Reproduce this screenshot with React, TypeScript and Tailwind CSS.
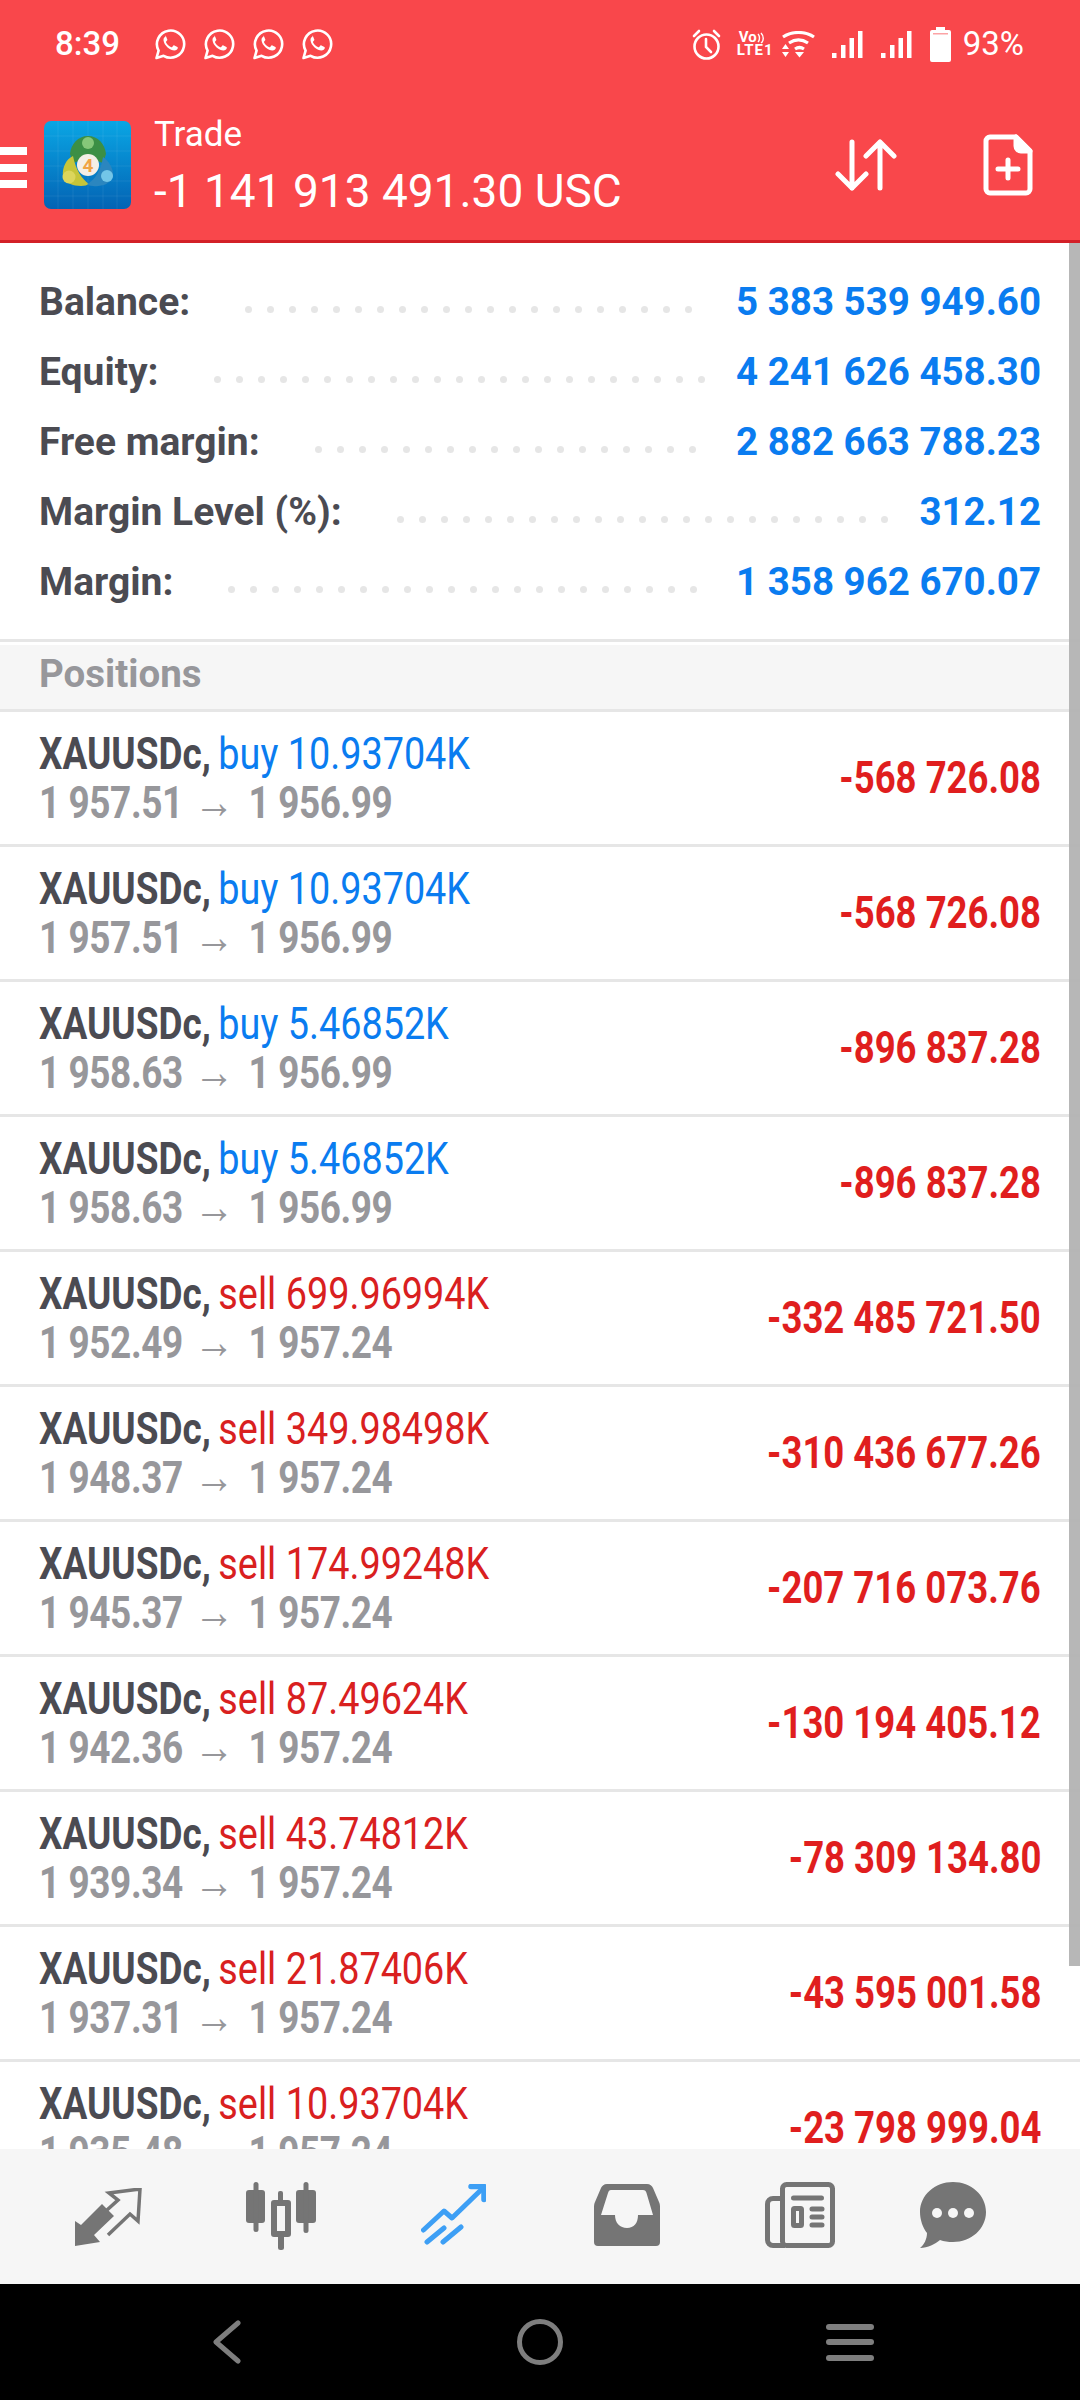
import React from "react";

const sumRows = [
  { label: "Balance:", value: "5 383 539 949.60" },
  { label: "Equity:", value: "4 241 626 458.30" },
  { label: "Free margin:", value: "2 882 663 788.23" },
  { label: "Margin Level (%):", value: "312.12" },
  { label: "Margin:", value: "1 358 962 670.07" },
];

const positions = [
  { side: "buy", lots: "10.93704K", open: "1 957.51", now: "1 956.99", pl: "-568 726.08" },
  { side: "buy", lots: "10.93704K", open: "1 957.51", now: "1 956.99", pl: "-568 726.08" },
  { side: "buy", lots: "5.46852K", open: "1 958.63", now: "1 956.99", pl: "-896 837.28" },
  { side: "buy", lots: "5.46852K", open: "1 958.63", now: "1 956.99", pl: "-896 837.28" },
  { side: "sell", lots: "699.96994K", open: "1 952.49", now: "1 957.24", pl: "-332 485 721.50" },
  { side: "sell", lots: "349.98498K", open: "1 948.37", now: "1 957.24", pl: "-310 436 677.26" },
  { side: "sell", lots: "174.99248K", open: "1 945.37", now: "1 957.24", pl: "-207 716 073.76" },
  { side: "sell", lots: "87.49624K", open: "1 942.36", now: "1 957.24", pl: "-130 194 405.12" },
  { side: "sell", lots: "43.74812K", open: "1 939.34", now: "1 957.24", pl: "-78 309 134.80" },
  { side: "sell", lots: "21.87406K", open: "1 937.31", now: "1 957.24", pl: "-43 595 001.58" },
  { side: "sell", lots: "10.93704K", open: "1 935.48", now: "1 957.24", pl: "-23 798 999.04" },
];

const leaderDots = Array.from({ length: 34 });

function WhatsApp() {
  return (
    <svg width="32" height="32" viewBox="0 0 32 32" fill="none">
      <path d="M2.5 30 L4.6 22.6 A13.6 13.6 0 1 1 9.6 27.8 Z" stroke="#fff" strokeWidth="2.6" strokeLinejoin="round" />
      <path d="M11.6 8.6c-.9.3-2.3 1.6-2.1 3.6.3 2.8 1.9 5.2 4.1 7.2 2.3 2 4.7 3 6.8 3 1.8 0 3.2-1.3 3.4-2.5.1-.5 0-.8-.4-1l-3-1.5c-.4-.2-.7-.1-1 .2l-1.2 1.5c-.3.3-.6.3-.9.2-1.3-.5-2.5-1.3-3.4-2.3-.8-.8-1.4-1.7-1.9-2.7-.1-.3 0-.6.2-.8l1-1.2c.2-.3.3-.6.1-.9l-1.2-3c-.2-.5-.5-.6-.9-.6z" fill="#fff" />
    </svg>
  );
}

function Signal() {
  return (
    <svg width="31" height="27" viewBox="0 0 31 27" fill="#fff">
      <rect x="0" y="22" width="4.5" height="5" />
      <rect x="9" y="14" width="4.5" height="13" />
      <rect x="17.5" y="7" width="4.5" height="20" />
      <rect x="26" y="0" width="4.5" height="27" />
    </svg>
  );
}

function StatusBar() {
  return (
    <div className="flex h-[90px] items-center pr-[56px] pb-[2px] pl-[55px] text-white">
      <span className="w-[99px] text-[33px] font-medium">8:39</span>
      <div className="flex gap-[17px]">
        <WhatsApp />
        <WhatsApp />
        <WhatsApp />
        <WhatsApp />
      </div>
      <div className="ml-auto flex items-center">
        {/* alarm */}
        <svg width="29" height="31" viewBox="0 0 29 31" fill="none" stroke="#fff" strokeWidth="2.6" strokeLinecap="round">
          <circle cx="14.5" cy="17.5" r="12" />
          <path d="M14 10v8l5 5M2 7l5-5M27 7l-5-5" />
        </svg>
        {/* volte */}
        <div className="ml-[16px] flex w-[36px] flex-col text-[15px] leading-[13px] font-bold">
          <div className="flex items-center pl-[2px]">
            <span>Vo</span>
            <svg width="9" height="12" viewBox="0 0 9 12" fill="none" stroke="#fff" strokeWidth="1.4">
              <path d="M1 2c2 2 2 6 0 8M4 1c3 3 3 8 0 10" />
            </svg>
          </div>
          <span className="tracking-[1px]">LTE1</span>
        </div>
        {/* wifi */}
        <svg className="ml-[9px]" width="33" height="27" viewBox="0 0 33 27" fill="none" stroke="#fff" strokeWidth="3.2">
          <path d="M1 6C10 0 23 0 32 6M7 12c6-4 13-4 19 0M13 18c3-2 6-2 9 0" />
          <path d="M0 18l3.5-5 3.5 5zM0 21l3.5 5 3.5-5zM13 21h9l-4.5 5.5z" fill="#fff" stroke="none" />
        </svg>
        <div className="ml-[17px]">
          <Signal />
        </div>
        <div className="ml-[18px]">
          <Signal />
        </div>
        {/* battery */}
        <svg className="ml-[18px]" width="21" height="35" viewBox="0 0 21 35" fill="#fff">
          <path d="M6 0h9v3h4a2 2 0 0 1 2 2v28a2 2 0 0 1-2 2H2a2 2 0 0 1-2-2V5a2 2 0 0 1 2-2h4z" />
          <rect x="3" y="6" width="15" height="1.5" fill="#f9474b" opacity="0.5" />
        </svg>
        <span className="ml-[12px] text-[33px] font-normal">93%</span>
      </div>
    </div>
  );
}

function AppLogo() {
  return (
    <svg width="87" height="88" viewBox="0 0 87 88" className="shrink-0">
      <defs>
        <linearGradient id="mtBg" x1="0" y1="0" x2="0" y2="1">
          <stop offset="0" stopColor="#0aa6e4" />
          <stop offset="1" stopColor="#0363b4" />
        </linearGradient>
      </defs>
      <rect width="87" height="88" rx="7" fill="url(#mtBg)" />
      <path d="M14 0v88M29 0v88M44 0v88M59 0v88M73 0v88M0 15h87M0 30h87M0 45h87M0 60h87M0 75h87" stroke="#fff" strokeOpacity="0.07" strokeWidth="1" />
      <path d="M44 15c10 0 17 8 18 18l-3 9-15-5-15 5-3-9c1-10 8-18 18-18z" fill="#3c8f45" />
      <circle cx="44" cy="22" r="6" fill="#86c77a" />
      <path d="M29 35c-7 3-11 12-10 20 2 7 10 10 18 10 4 0 6-1 8-2-8-6-13-14-16-28z" fill="#c6c53a" />
      <circle cx="25" cy="56" r="6.5" fill="#dcd65c" />
      <path d="M59 36c6 4 11 12 10 20-3 7-12 10-20 9-3 0-5-1-6-2 8-4 14-14 16-27z" fill="#2b86bf" />
      <circle cx="63" cy="55" r="6" fill="#73c6e8" />
      <circle cx="44" cy="44" r="11" fill="#f4efe6" />
      <text x="44" y="51" textAnchor="middle" fontSize="19" fontWeight="700" fill="#f0a444" fontFamily="Roboto, sans-serif">4</text>
    </svg>
  );
}

function Header() {
  return (
    <div className="h-[243px] border-b-[3px] border-[#d32028] bg-[#f9474b]">
      <StatusBar />
      <div className="flex h-[150px] items-start">
        {/* menu bars are cut by the screen edge */}
        <div className="mt-[57px] flex w-[27px] flex-col gap-[8.5px]">
          <div className="h-[8px] bg-white" />
          <div className="h-[8px] bg-white" />
          <div className="h-[8px] bg-white" />
        </div>
        <div className="mt-[31px] ml-[17px]">
          <AppLogo />
        </div>
        <div className="mt-[19px] ml-[23px] flex flex-col whitespace-nowrap text-white">
          <span className="text-[35px] leading-[52px] font-normal">Trade</span>
          <span className="text-[46px] leading-[60px] font-normal">-1 141 913 491.30 USC</span>
        </div>
        <svg className="mt-[49px] ml-auto" width="62" height="52" viewBox="0 0 62 52" fill="none" stroke="#fff" strokeWidth="5" strokeLinecap="round" strokeLinejoin="round">
          <path d="M17 3v46M3 35l14 14 14-14M45 49V3M31 17L45 3l14 14" />
        </svg>
        <svg className="mt-[44px] mr-[47px] ml-[86px]" width="50" height="62" viewBox="0 0 50 62" fill="none" stroke="#fff" strokeWidth="5" strokeLinejoin="round">
          <path d="M7 3h26l14 14v38a4 4 0 0 1-4 4H7a4 4 0 0 1-4-4V7a4 4 0 0 1 4-4z" />
          <path d="M33 3v9a5 5 0 0 0 5 5h9z" fill="#fff" />
          <path d="M25 26v18M15 35h20" strokeLinecap="round" />
        </svg>
      </div>
    </div>
  );
}

function Summary() {
  return (
    <div className="h-[396px] pt-[24px] pr-[39px] pl-[39px]">
      {sumRows.map((r) => (
        <div key={r.label} className="flex h-[70px] items-center">
          <span className="text-[39px] font-bold text-[#4b4b52]">{r.label}</span>
          {/* dotted leader, extra dots wrap out of sight */}
          <div className="mt-[15px] mr-[22px] ml-[55px] flex h-[7px] min-w-0 flex-1 flex-wrap gap-x-[15px] overflow-hidden">
            {leaderDots.map((_, i) => (
              <span key={i} className="size-[7px] rounded-full bg-[#e6e6e6]" />
            ))}
          </div>
          <span className="text-[38.5px] font-bold text-[#0a7cf0]">{r.value}</span>
        </div>
      ))}
    </div>
  );
}

function PositionRow({ p }: { p: (typeof positions)[number] }) {
  const isBuy = p.side === "buy";
  return (
    <div className="flex h-[135px] items-center justify-between border-b-[3px] border-[#e6e6e6] pr-[39px] pl-[39px]">
      <div className="flex origin-left scale-x-[0.84] flex-col text-[44px] leading-[48px] whitespace-nowrap">
        <div>
          <span className="font-bold text-[#4b4b52]">XAUUSDc, </span>
          <span className={isBuy ? "-ml-[2px] text-[45px] text-[#0a7cf0]" : "-ml-[2px] text-[45px] text-[#d9201f]"}>
            {p.side} {p.lots}
          </span>
        </div>
        <div className="flex items-baseline font-bold tracking-[-0.5px] text-[#97979b]">
          <span className="whitespace-pre">{p.open} </span>
          <span className="mr-[7px] ml-[3px] text-[48px] font-normal">→</span>
          <span className="whitespace-pre"> {p.now}</span>
        </div>
      </div>
      <span className="origin-right scale-x-[0.83] text-[44px] font-bold whitespace-nowrap text-[#e01e1e]">{p.pl}</span>
    </div>
  );
}

function Positions() {
  return (
    <div className="min-h-0 flex-1 overflow-hidden">
      <div className="border-t-[3px] border-[#e6e6e6] pt-[3px]">
        <div className="flex h-[67px] items-center border-b-[3px] border-[#e6e6e6] bg-[#f6f6f6] pb-[7px] pl-[39px] text-[38.5px] font-bold text-[#97979b]">
          Positions
        </div>
      </div>
      {positions.map((p, i) => (
        <PositionRow key={i} p={p} />
      ))}
    </div>
  );
}

function BottomNav() {
  const g = "#757575";
  return (
    <div className="flex h-[135px] shrink-0 items-start bg-[#f6f6f6] pl-[75px]">
      {/* quotes */}
      <svg className="mt-[39px]" width="67" height="58" viewBox="0 0 67 58" fill="none">
        <path d="M0 58V33l6 4 21-21 12 12-20 19 6 7z" fill={g} />
        <path d="M32 22l11-10-9-7 31-4-2 32-8-7-22 21" stroke={g} strokeWidth="3.5" />
      </svg>
      {/* chart */}
      <svg className="mt-[33px] ml-[104px]" width="70" height="68" viewBox="0 0 70 68" fill={g}>
        <rect x="0" y="8" width="19" height="33" rx="3" />
        <rect x="7.5" y="0" width="5" height="50" rx="2.5" />
        <path fillRule="evenodd" d="M28 18h14a3 3 0 0 1 3 3v31a3 3 0 0 1-3 3H28a3 3 0 0 1-3-3V21a3 3 0 0 1 3-3zM31 24v25h8V24z" />
        <rect x="32" y="9" width="5" height="12" rx="2" />
        <rect x="32" y="52" width="6" height="16" rx="2.5" />
        <rect x="50" y="8" width="20" height="33" rx="3" />
        <rect x="57.5" y="0" width="5" height="51" rx="2.5" />
      </svg>
      {/* trade */}
      <svg className="mt-[35px] ml-[105px]" width="65" height="61" viewBox="0 0 65 61" fill="none" stroke="#3d9ff5" strokeWidth="5" strokeLinecap="round" strokeLinejoin="round">
        <path d="M2.5 46L23 27l8 7L62 4" />
        <path d="M50 2.5h13v13" strokeWidth="5.5" />
        <path d="M6 58l17-14M22 58l18-15" />
      </svg>
      {/* history */}
      <svg className="mt-[35px] ml-[108px]" width="66" height="62" viewBox="0 0 66 62" fill={g}>
        <path d="M13 0H53c3 0 5 2 6 4l6 14c1 2 1 4 1 6v34a4 4 0 0 1-4 4H4a4 4 0 0 1-4-4V24c0-2 0-4 1-6L7 4c1-2 3-4 6-4z" />
        <path d="M17 6H49c2 0 3 1 3.5 3L59 31H44c0 8-4 13-11 13s-12-5-12-13H7l7-22c.5-2 1.5-3 3-3z" fill="#f6f6f6" />
      </svg>
      {/* news */}
      <svg className="mt-[33px] ml-[105px]" width="70" height="66" viewBox="0 0 70 66" fill="none" stroke={g} strokeWidth="5">
        <rect x="17.5" y="2.5" width="50" height="61" rx="4" />
        <path d="M15 16.5H8A5.5 5.5 0 0 0 2.5 22v36A5.5 5.5 0 0 0 8 63.5h12" />
        <path d="M28.5 16h28M47 27h10M47 35h10M47 43h10" strokeLinecap="round" />
        <rect x="28.5" y="26.5" width="8" height="17" rx="1" />
      </svg>
      {/* chat */}
      <svg className="mt-[33px] ml-[85px]" width="66" height="66" viewBox="0 0 66 66" fill={g}>
        <path d="M33 0C51 0 66 13 66 30S51 60 33 60c-5 0-9-.5-13-2-5 4-12 8-20 8 4-3 7-9 7-15C3 46 0 38 0 30 0 13 15 0 33 0z" />
        <circle cx="17" cy="31" r="5" fill="#f6f6f6" />
        <circle cx="33" cy="31" r="5" fill="#f6f6f6" />
        <circle cx="49" cy="31" r="5" fill="#f6f6f6" />
      </svg>
    </div>
  );
}

function NavBar() {
  return (
    <div className="flex h-[116px] shrink-0 items-center bg-black pl-[211px]">
      <svg width="32" height="44" viewBox="0 0 32 44" fill="none" stroke="#7e7e7e" strokeWidth="5" strokeLinecap="round" strokeLinejoin="round">
        <path d="M27 3L5 22l22 19" />
      </svg>
      <div className="ml-[274px] size-[46px] rounded-full border-[5px] border-[#7e7e7e]" />
      <div className="ml-[263px] flex w-[48px] flex-col gap-[9.5px]">
        <div className="h-[6px] rounded-full bg-[#7e7e7e]" />
        <div className="h-[6px] rounded-full bg-[#7e7e7e]" />
        <div className="h-[6px] rounded-full bg-[#7e7e7e]" />
      </div>
    </div>
  );
}

export default function App() {
  return (
    <div className="flex h-[2400px] w-[1080px] flex-col overflow-hidden bg-white font-['Roboto',sans-serif]">
      <Header />
      <div className="relative flex min-h-0 flex-1 flex-col">
        <Summary />
        <Positions />
        {/* scrollbar thumb */}
        <div className="absolute top-0 right-0 h-[1723px] w-[11px] bg-[#b3b3b3] opacity-95" />
      </div>
      <BottomNav />
      <NavBar />
    </div>
  );
}
